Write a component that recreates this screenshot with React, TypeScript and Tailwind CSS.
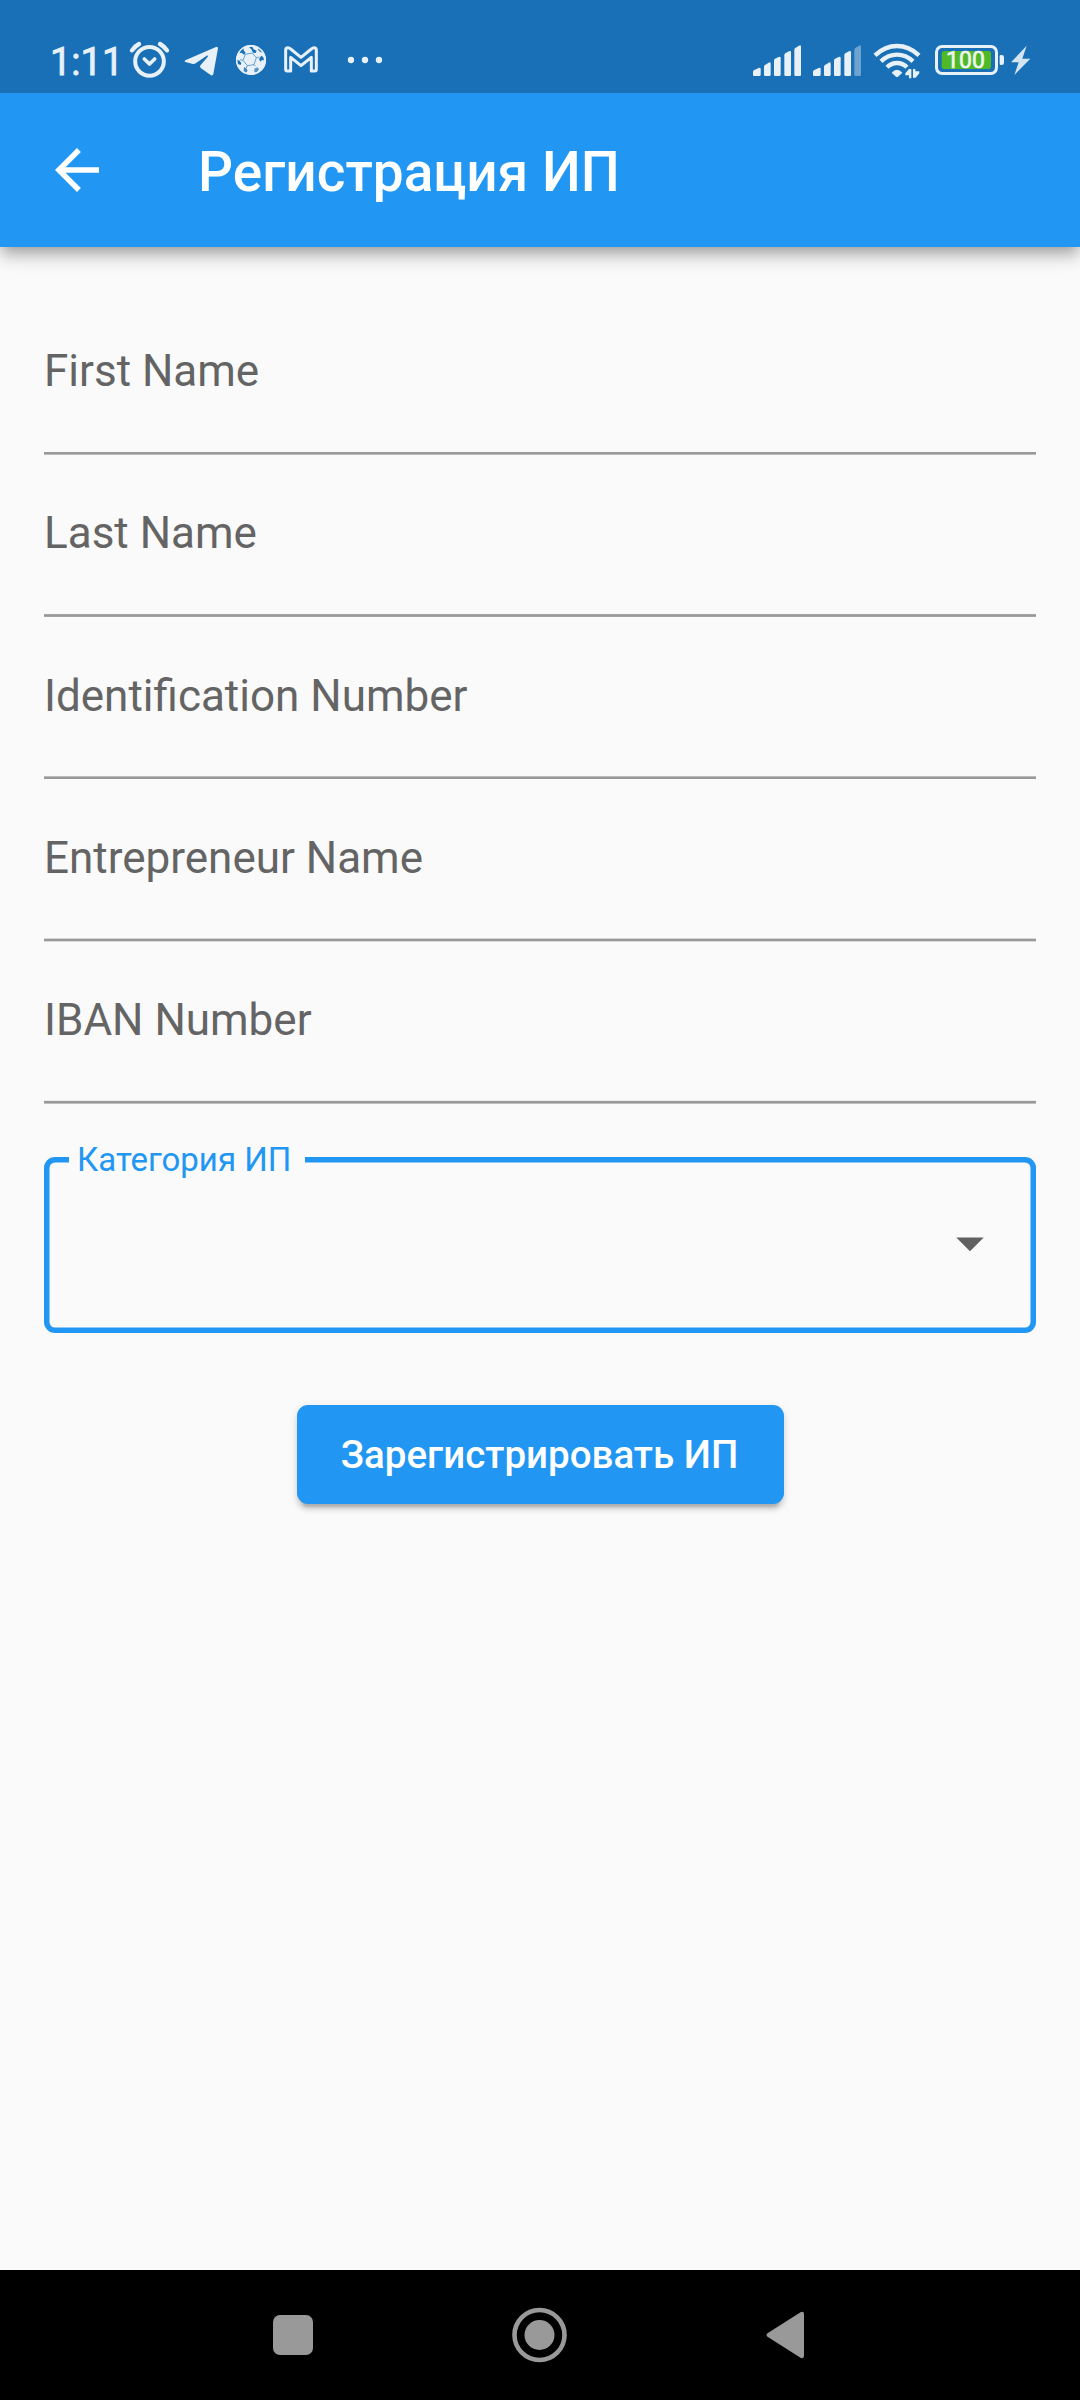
import type { ReactNode } from "react";

const FIELDS = [
  { label: "First Name", gap: "mb-[55px]", line: "linear-gradient(#999 0 2px,#bcbcbc 2px 3px,#fafafa 3px)" },
  { label: "Last Name", gap: "mb-[55px]", line: "linear-gradient(#a4a4a4 0 1px,#999 1px 2px,#a4a4a4 2px 3px,#fafafa 3px)" },
  { label: "Identification Number", gap: "mb-[54px]", line: "linear-gradient(#bcbcbc 0 1px,#999 1px 3px,#fafafa 3px)" },
  { label: "Entrepreneur Name", gap: "mb-[54px]", line: "linear-gradient(#d5d5d5 0 1px,#999 1px 3px,#d9d9d9 3px)" },
  { label: "IBAN Number", gap: "mb-[54px]", line: "linear-gradient(#ededed 0 1px,#999 1px 3px,#bfbfbf 3px)" },
];

function StatusIcon({ box, className, children }: { box: string; className: string; children: ReactNode }) {
  return (
    <svg viewBox={box} className={`h-[60px] shrink-0 ${className}`} fill="#e8f1f8">
      {children}
    </svg>
  );
}

function SignalBars({ className, weak = false }: { className: string; weak?: boolean }) {
  return (
    <StatusIcon box="66 30 150 180" className={className}>
      <path d="M69 156q0-4 4-6l13-6q6-2 6 3v17q0 4-4 4H73q-4 0-4-4z" />
      <path d="M102 141q0-4 3-6l11-7q6-3 6 3v33q0 4-4 4h-12q-4 0-4-4z" />
      <path d="M132 122q0-4 3-6l11-5q6-2 6 3v50q0 4-4 4h-12q-4 0-4-4z" />
      <path d="M163 106q0-4 3-6l11-6q6-3 6 3v67q0 4-4 4h-12q-4 0-4-4z" />
      <path d="M193 90q0-4 3-6l11-7q6-3 6 3v84q0 4-4 4h-12q-4 0-4-4z" opacity={weak ? 0.4 : 1} />
    </StatusIcon>
  );
}

function StatusBar() {
  return (
    <div className="relative z-10 flex h-[93px] shrink-0 bg-[#1970b6] pl-[50px] pr-[49px] pt-[30px]">
      <span className="mt-[9px] w-[78px] whitespace-nowrap text-[38px] leading-[46px] text-[#e8f1f8] [-webkit-text-stroke:0.8px_#e8f1f8]">1:11</span>
      <StatusIcon box="294 30 129 180" className="w-[43px]">
        <circle cx="358.500" cy="124" r="43" fill="none" stroke="#e8f1f8" strokeWidth="12" />
        <path d="M343 117l15.500 15 15.500-15" fill="none" stroke="#e8f1f8" strokeWidth="11" strokeLinecap="round" strokeLinejoin="round" />
        <path d="M306 91q8-12 21-19M411 91q-8-12-21-19" fill="none" stroke="#e8f1f8" strokeWidth="13" strokeLinecap="round" />
      </StatusIcon>
      <StatusIcon box="459 30 108 180" className="ml-[12px] w-[36px]">
        <path d="M466 121L558 81q6-2 6 4l-14 77q-2 7-8 3l-30-21q-4-4 0-9l21-24q3-5-3-4l-33 23q-5 3-11 1l-20-5q-5-2 0-5z" />
      </StatusIcon>
      <StatusIcon box="615 30 96 180" className="ml-[16px] w-[32px]">
        <circle cx="663" cy="120" r="45" />
        <path
          d="M646 103l21-4 12 14-7 21-20 3-13-16zM679 113l9-2M672 134l5 5M652 137l-3 7M639 121l-9-2"
          fill="none"
          stroke="#1970b6"
          strokeOpacity=".75"
          strokeWidth="2.500"
        />
        <g fill="#1970b6">
          <path d="M632 90l8-6 1 7 6 8-5 5-7-6-7 2z" />
          <path d="M657 82l10-2 4 8 9 4-3 7-8-1-5-10z" />
          <path d="M685 84l7 6 5 8-8-3-5-6z" opacity=".8" />
          <path d="M694 107l6 5 2 9-6-1-5 5-4-8z" />
          <path d="M621 119l8 3 5 7-2 6-9-3z" />
          <path d="M642 141l7 4 4 7-5 6-7-5z" opacity=".8" />
          <path d="M673 146l10-4 4 6-6 8-8 1z" opacity=".7" />
        </g>
        <circle cx="663" cy="120" r="43" fill="none" stroke="#e8f1f8" strokeWidth="4" />
      </StatusIcon>
      <StatusIcon box="759 30 108 180" className="ml-[16px] w-[36px]">
        <path d="M767 91q0-8 7-8 4 0 8 4l31 25 31-25q4-4 8-4 7 0 7 8v57q0 5-5 5h-10v-41l-31 25-31-25v41h-10q-5 0-5-5z" fill="none" stroke="#e8f1f8" strokeWidth="9" strokeLinejoin="round" />
      </StatusIcon>
      <StatusIcon box="948 30 114 180" className="ml-[27px] w-[38px]">
        <circle cx="963" cy="120" r="9.500" />
        <circle cx="1005" cy="120" r="9.500" />
        <circle cx="1047" cy="120" r="9.500" />
      </StatusIcon>

      <SignalBars className="ml-auto w-[50px]" />
      <SignalBars className="ml-[10px] w-[50px]" weak />
      <StatusIcon box="429 30 144 180" className="ml-[11px] w-[48px]">
        <g fill="none" stroke="#e8f1f8" strokeWidth="13">
          <path d="M435 106q30-28 66-28t66 28" />
          <path d="M453 124q21-20 48-20t48 20" />
          <path d="M471 142q13-13 30-13t30 13" />
        </g>
        <path d="M485 158q8-9 16-9t16 9l-13 12q-3 2-6 0z" />
        <path d="M530 142h38v36h-38z" fill="#1970b6" />
        <path d="M537 147h7v28h-7v-9h-11v-6zM549 147h7v7h12v6l-11 13h-8z" />
      </StatusIcon>
      <div className="relative ml-[13px] h-[60px] w-[71px]">
        <StatusIcon box="612 30 213 180" className="w-[71px]">
          <rect x="619.500" y="79.500" width="180" height="81" rx="17" fill="none" stroke="#e8f1f8" strokeWidth="9" />
          <rect x="635" y="93" width="148" height="54" rx="8" fill="#4fb928" />
          <path d="M809 109q0-4 4-4h2q7 0 7 7v16q0 7-7 7h-2q-4 0-4-4z" />
        </StatusIcon>
        <span className="absolute left-0 top-[18px] w-[63px] text-center text-[23px] leading-[26px] text-[#eef6ee] [-webkit-text-stroke:0.6px_#eef6ee]">100</span>
      </div>
      <StatusIcon box="840 30 63 180" className="ml-[5px] w-[21px]">
        <path d="M890 77l-47 50h23l-13 38 48-49h-24z" opacity=".9" />
      </StatusIcon>
    </div>
  );
}

function AppBar() {
  return (
    <header className="relative flex h-[154px] shrink-0 items-center bg-[#2196f3] pl-[44px] text-white shadow-[0_5.5px_11px_-2.75px_rgba(0,0,0,0.2),0_11px_13.75px_rgba(0,0,0,0.14),0_2.75px_27.5px_rgba(0,0,0,0.12)]">
      <svg viewBox="0 0 24 24" className="h-[66px] w-[66px]" fill="currentColor">
        <path d="M20 11H7.830l5.590-5.590L12 4l-8 8 8 8 1.410-1.410L7.830 13H20v-2z" />
      </svg>
      <h1 className="ml-[88px] mt-[3px] text-[55px] font-medium leading-[64px]">Регистрация ИП</h1>
    </header>
  );
}

function NavBar() {
  return (
    <nav className="flex h-[130px] shrink-0 items-center bg-black pl-[273px] text-[#999]">
      <div className="h-[40px] w-[40px] rounded-[7px] bg-[#999]" />
      <svg viewBox="0 0 56 56" className="ml-[199px] h-[56px] w-[56px]">
        <circle cx="27.500" cy="28" r="25" fill="none" stroke="currentColor" strokeWidth="4.600" />
        <circle cx="27.500" cy="28" r="15" fill="currentColor" />
      </svg>
      <svg viewBox="0 0 38 48" className="ml-[198px] h-[48px] w-[38px]" fill="currentColor">
        <path d="M1.500 22.200L34.500 1.200q3.500-1.500 3.500 2v41.600q0 3.500-3.500 2L1.500 25.800q-2-1.800 0-3.600z" />
      </svg>
    </nav>
  );
}

export default function App() {
  return (
    <div className="flex h-[2400px] w-[1080px] flex-col overflow-hidden bg-[#fafafa] font-['Roboto',sans-serif]">
      <StatusBar />
      <AppBar />
      <main className="flex flex-1 flex-col px-[44px] pt-[47px]">
        {FIELDS.map((field) => (
          <div key={field.label} className="flex h-[162px] flex-col justify-end">
            <label className={`text-[44px] leading-[52px] text-[#646464] ${field.gap}`}>{field.label}</label>
            <div className="h-[4px]" style={{ background: field.line }} />
          </div>
        ))}
        <div className="relative mt-[53px] flex h-[176px] shrink-0 items-center justify-end rounded-[11px] pb-[4px] pr-[33px] shadow-[inset_0_0_0_5.5px_#2196f3]">
          <span className="absolute left-[25px] top-[-7px] h-[40px] w-[236px] whitespace-nowrap bg-[#fafafa] pl-[8px] text-[33px] leading-[20px] text-[#2196f3]">
            Категория ИП
          </span>
          <svg viewBox="0 0 24 24" className="h-[66px] w-[66px]" fill="#616161">
            <path d="M7 10l5 5 5-5z" />
          </svg>
        </div>
        <button className="ml-[252.5px] mt-[72px] h-[99px] w-[487px] shrink-0 rounded-[11px] bg-[#2196f3] pr-[1px] text-[38.5px] font-medium leading-[45px] text-white shadow-[0_8.25px_2.75px_-5.5px_rgba(0,0,0,0.16),0_5.5px_5.5px_rgba(0,0,0,0.11),0_2.75px_10px_rgba(0,0,0,0.1)]">
          Зарегистрировать ИП
        </button>
      </main>
      <NavBar />
    </div>
  );
}
